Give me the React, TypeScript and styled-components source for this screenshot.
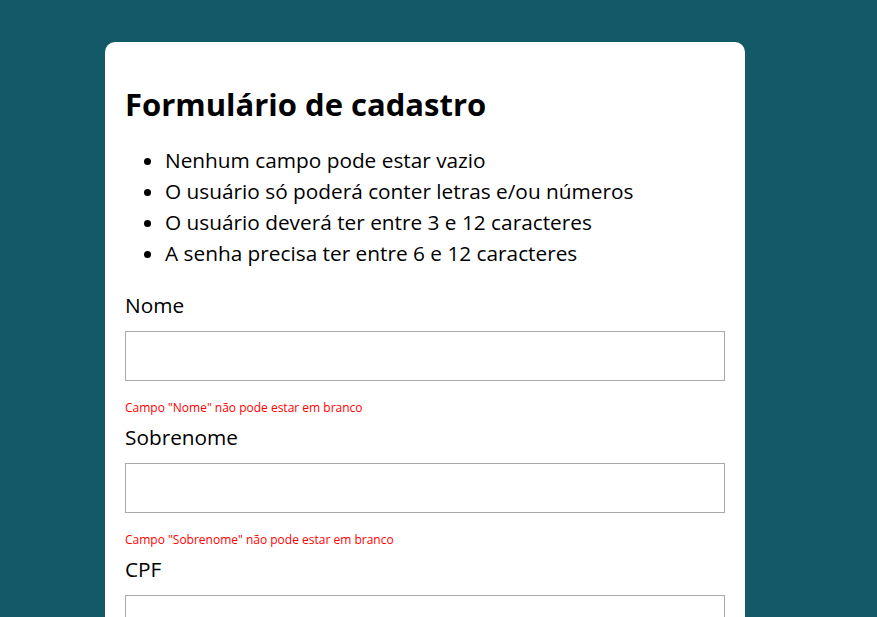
import React from 'react';
import styled, { createGlobalStyle } from 'styled-components';

const GlobalStyle = createGlobalStyle`
  body {
    margin: 0;
    background: #135968;
    font-family: "Open Sans", "Liberation Sans", sans-serif;
  }
`

const Card = styled.form`
  width: 640px;
  box-sizing: border-box;
  margin: 42px 0 0 105px;
  padding: 20px 20px 40px;
  background: #fff;
  border-radius: 10px;
`

const Title = styled.h1`
  font-size: 31px;
  line-height: 42px;
  font-weight: 700;
  margin: 21px 0 20px;
  color: #000;
`

const Rules = styled.ul`
  margin: 0 0 23px;
  padding-left: 40px;
  font-size: 20.8px;
  line-height: 31px;
`

const Field = styled.div`
  display: flex;
  flex-direction: column;
`

const Label = styled.label`
  font-size: 20.8px;
  line-height: 27px;
  margin-bottom: 12px;
`

const Input = styled.input`
  height: 50px;
  box-sizing: border-box;
  border: 1px solid #aaa;
  font-size: 18px;
  padding: 0 10px;
  outline: none;
`

const Error = styled.span`
  color: #ff0000;
  font-size: 12px;
  line-height: 16px;
  margin: 19px 0 8px;
`

const fields = [
  { label: 'Nome', error: 'Campo "Nome" não pode estar em branco' },
  { label: 'Sobrenome', error: 'Campo "Sobrenome" não pode estar em branco' },
  { label: 'CPF', error: 'Campo "CPF" não pode estar em branco' },
]

export default function App() {
  return (
    <>
      <GlobalStyle />
      <Card onSubmit={e => e.preventDefault()}>
        <Title>Formulário de cadastro</Title>
        <Rules>
          <li>Nenhum campo pode estar vazio</li>
          <li>O usuário só poderá conter letras e/ou números</li>
          <li>O usuário deverá ter entre 3 e 12 caracteres</li>
          <li>A senha precisa ter entre 6 e 12 caracteres</li>
        </Rules>
        {fields.map(f => (
          <Field key={f.label}>
            <Label>{f.label}</Label>
            <Input type="text" />
            <Error>{f.error}</Error>
          </Field>
        ))}
      </Card>
    </>
  )
}
